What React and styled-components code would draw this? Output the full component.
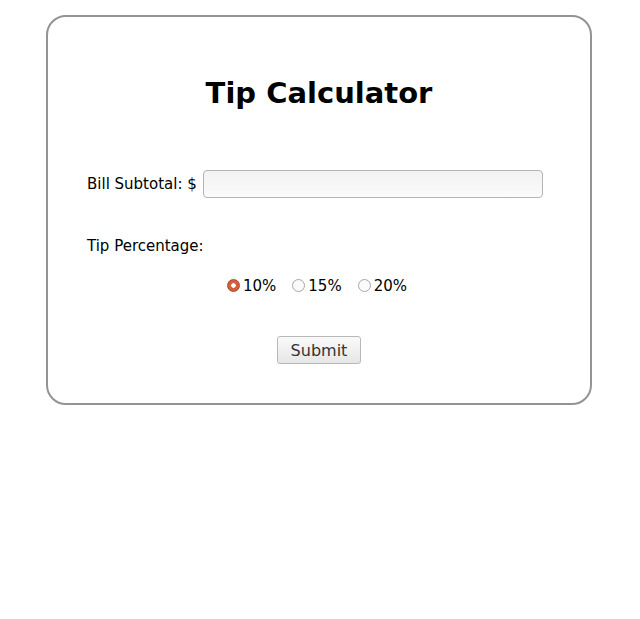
import React, { useState } from "react";
import styled, { createGlobalStyle } from "styled-components";

const GlobalStyle = createGlobalStyle`
  body {
    margin: 0;
    background: #ffffff;
    font-family: "DejaVu Sans", "Liberation Sans", sans-serif;
    color: #000;
  }
`;

export default function App() {
  const [tip, setTip] = useState("10");
  const [bill, setBill] = useState("");

  return (
    <Page>
      <GlobalStyle />
      <Card>
        <Title>Tip Calculator</Title>
        <BillRow>
          <Label htmlFor="bill">Bill Subtotal: $</Label>
          <Input id="bill" value={bill} onChange={(e) => setBill(e.target.value)} />
        </BillRow>
        <Label>Tip Percentage:</Label>
        <RadioRow>
          {["10", "15", "20"].map((v) => (
            <RadioLabel key={v}>
              <Radio
                type="radio"
                name="tip"
                value={v}
                checked={tip === v}
                onChange={() => setTip(v)}
              />
              {v}%
            </RadioLabel>
          ))}
        </RadioRow>
        <ButtonRow>
          <SubmitButton type="button">Submit</SubmitButton>
        </ButtonRow>
      </Card>
    </Page>
  );
}

const Page = styled.div`
  padding: 15px 0 0 46px;
`;

const Card = styled.div`
  box-sizing: border-box;
  width: 546px;
  height: 390px;
  border: 2px solid #949494;
  border-radius: 20px;
  padding: 0 39px;
  display: flex;
  flex-direction: column;
`;

const Title = styled.h1`
  margin: 59px 0 0;
  text-align: center;
  font-size: 29px;
  font-weight: bold;
  line-height: 34px;
`;

const BillRow = styled.div`
  display: flex;
  align-items: center;
  gap: 6px;
  margin-top: 60px;
  margin-bottom: 38px;
`;

const Label = styled.label`
  font-size: 15px;
  line-height: 20px;
  white-space: nowrap;
  flex-shrink: 0;
`;

const Input = styled.input`
  box-sizing: border-box;
  width: 340px;
  height: 28px;
  border: 1px solid #b4b4b4;
  border-radius: 4px;
  background: linear-gradient(#f2f2f2, #fbfbfb);
  outline: none;
`;

const RadioRow = styled.div`
  display: flex;
  justify-content: center;
  gap: 16px;
  margin-top: 20px;
  padding-right: 4px;
`;

const RadioLabel = styled.label`
  display: flex;
  align-items: center;
  gap: 3px;
  font-size: 15px;
  line-height: 20px;
`;

const Radio = styled.input`
  appearance: none;
  margin: 0 0 2px;
  width: 13px;
  height: 13px;
  border-radius: 50%;
  border: 1px solid #a8a8a8;
  background: #fafafa;
  box-sizing: border-box;
  &:checked {
    border-color: #a7482b;
    background: radial-gradient(circle, #ffffff 0 2px, #d2603b 2.5px);
  }
`;

const ButtonRow = styled.div`
  display: flex;
  justify-content: center;
  margin-top: 40px;
`;

const SubmitButton = styled.button`
  font-family: "DejaVu Sans", sans-serif;
  font-size: 16px;
  color: #333;
  padding: 0 12px;
  height: 28px;
  width: 84px;
  border: 1px solid #b8b8b8;
  border-radius: 3px;
  background: linear-gradient(#fafafa, #e6e6e6);
`;
